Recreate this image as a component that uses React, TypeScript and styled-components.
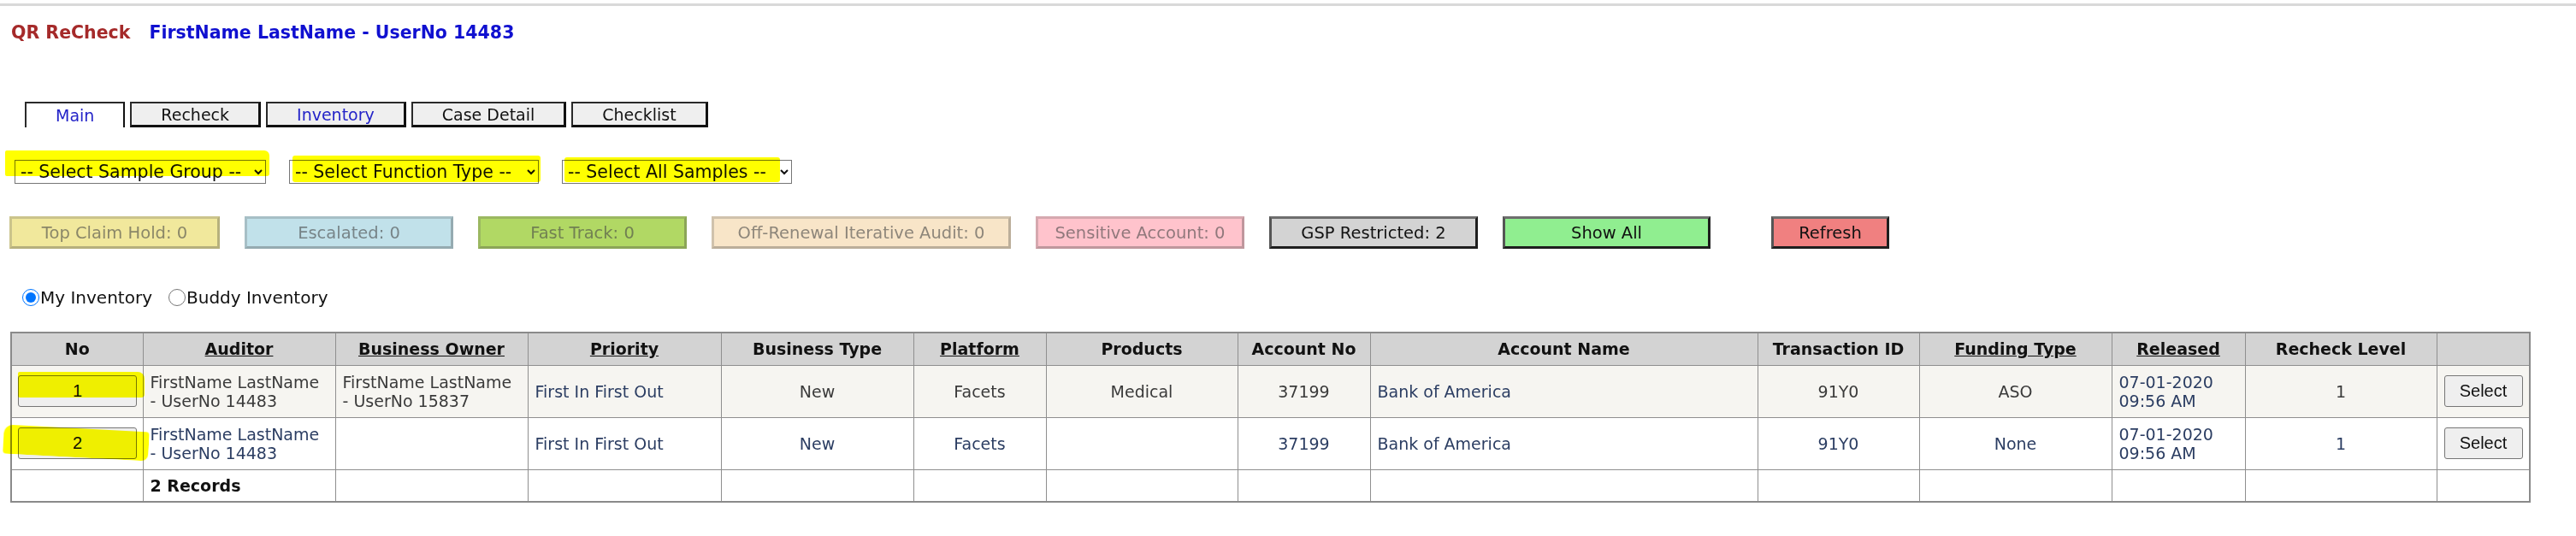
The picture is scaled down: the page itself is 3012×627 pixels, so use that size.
import React from "react";
import styled, { createGlobalStyle } from "styled-components";

const GlobalStyle = createGlobalStyle`
  html, body { margin: 0; padding: 0; background: #ffffff; }
  body { font-family: "DejaVu Sans", Verdana, sans-serif; color: #111; }
`;

const Page = styled.div`
  width: 3012px;
  padding-top: 4px;
`;

const TopRule = styled.div`
  height: 3px;
  background: #d9d9d9;
`;

const TitleBar = styled.h1`
  margin: 19px 0 0;
  padding-left: 13px;
  display: flex;
  gap: 22px;
  align-items: baseline;
  font-size: 20.5px;
  line-height: 24px;
  font-weight: bold;
`;

const AppName = styled.span`
  color: #a52a2a;
`;

const UserName = styled.span`
  color: #1010d0;
`;

const TabBar = styled.nav`
  display: flex;
  gap: 6px;
  margin: 69px 0 0 29px;
`;

const Tab = styled.div<{ $active?: boolean; $link?: boolean }>`
  box-sizing: border-box;
  height: 30px;
  padding: 0 34px;
  display: flex;
  align-items: center;
  font-size: 19px;
  color: ${(p) => (p.$link ? "#2323c8" : "#111")};
  background: ${(p) => (p.$active ? "#ffffff" : "#efefef")};
  border-style: solid;
  border-width: ${(p) => (p.$active ? "2px 2px 0 2px" : "2px 3px 3px 2px")};
  border-color: #2a2a2a #111 #111 #2a2a2a;
`;

const FilterRow = styled.div`
  display: flex;
  gap: 27px;
  margin: 38px 0 0 17px;
`;

const Mark = styled.span<{ $rot?: number; $r?: string }>`
  position: absolute;
  background: #ffff00;
  mix-blend-mode: multiply;
  pointer-events: none;
  border-radius: ${(p) => p.$r ?? "3px"};
  transform: rotate(${(p) => p.$rot ?? 0}deg);
`;

const SelectWrap = styled.div`
  position: relative;
  display: flex;
`;

const Select = styled.select<{ $w: number }>`
  width: ${(p) => p.$w}px;
  height: 28px;
  box-sizing: border-box;
  font-family: "DejaVu Sans", Verdana, sans-serif;
  font-size: 20.5px;
  color: #111;
  background: #ffffff;
  border: 1px solid #767676;
  border-radius: 0;
  padding: 0 2px;
`;

const StatusRow = styled.div`
  display: flex;
  gap: 29px;
  margin: 38px 0 0 11px;
`;

const StatusButton = styled.button<{
  $w: number;
  $bg: string;
  $off?: boolean;
  $push?: number;
}>`
  box-sizing: border-box;
  width: ${(p) => p.$w}px;
  height: 38px;
  margin-left: ${(p) => p.$push ?? 0}px;
  font-family: "DejaVu Sans", Verdana, sans-serif;
  font-size: 19.5px;
  background: ${(p) => p.$bg};
  color: ${(p) => (p.$off ? "rgba(70,70,70,0.6)" : "#111")};
  border-style: solid;
  border-width: 3px;
  border-color: ${(p) =>
    p.$off
      ? "rgba(90,90,90,0.25) rgba(60,60,60,0.32) rgba(60,60,60,0.32) rgba(90,90,90,0.25)"
      : "#6e6e6e #1e1e1e #1e1e1e #555555"};
  padding: 0;
  white-space: nowrap;
`;

const RadioRow = styled.div`
  display: flex;
  align-items: center;
  margin: 45px 0 0 26px;
  gap: 19px;
  font-size: 20px;
`;

const RadioLabel = styled.label`
  display: flex;
  align-items: center;
  gap: 1px;
`;

const Radio = styled.input`
  width: 20px;
  height: 20px;
  margin: 0;
  accent-color: #0075ff;
`;

const Table = styled.table`
  margin: 28px 0 0 12px;
  border-collapse: collapse;
  table-layout: fixed;
  width: 2946px;
  border: 2px solid #8a8a8a;
  font-size: 19px;
  line-height: 22px;
`;

const HeadRow = styled.tr`
  height: 38px;
  background: #d3d3d3;
`;

const BodyRow = styled.tr<{ $shade?: boolean; $h: number }>`
  height: ${(p) => p.$h}px;
  background: ${(p) => (p.$shade ? "#f6f5f1" : "#ffffff")};
`;

const Th = styled.th<{ $u?: boolean }>`
  border: 1px solid #8f8f8f;
  font-weight: bold;
  text-align: center;
  padding: 0 6px;
  color: #111;
  text-decoration: ${(p) => (p.$u ? "underline" : "none")};
`;

const Td = styled.td<{ $align?: string; $tone?: "navy" | "dark" }>`
  position: relative;
  border: 1px solid #8f8f8f;
  padding: 0 8px;
  vertical-align: middle;
  text-align: ${(p) => p.$align ?? "left"};
  color: ${(p) => (p.$tone === "navy" ? "#2b3d62" : "#3a3a3a")};
`;

const Strong = styled.span`
  font-weight: bold;
  color: #111;
`;

const RowButton = styled.button<{ $w: number }>`
  position: relative;
  width: ${(p) => p.$w}px;
  height: 37px;
  box-sizing: border-box;
  font-family: "Liberation Sans", Arial, sans-serif;
  font-size: 20px;
  color: #111;
  background: #efefef;
  border: 1px solid #767676;
  border-radius: 3px;
  padding: 0;
`;

const NoCell = styled(Td)`
  text-align: left;
  padding: 0 0 0 7px;
`;

type Row = {
  no: string;
  auditor: string[];
  owner: string[];
  priority: string;
  btype: string;
  platform: string;
  products: string;
  accNo: string;
  accName: string;
  txn: string;
  funding: string;
  released: string[];
  level: string;
};

const rows: Row[] = [
  {
    no: "1",
    auditor: ["FirstName LastName", "- UserNo 14483"],
    owner: ["FirstName LastName", "- UserNo 15837"],
    priority: "First In First Out",
    btype: "New",
    platform: "Facets",
    products: "Medical",
    accNo: "37199",
    accName: "Bank of America",
    txn: "91Y0",
    funding: "ASO",
    released: ["07-01-2020", "09:56 AM"],
    level: "1",
  },
  {
    no: "2",
    auditor: ["FirstName LastName", "- UserNo 14483"],
    owner: [],
    priority: "First In First Out",
    btype: "New",
    platform: "Facets",
    products: "",
    accNo: "37199",
    accName: "Bank of America",
    txn: "91Y0",
    funding: "None",
    released: ["07-01-2020", "09:56 AM"],
    level: "1",
  },
];

const columns: { label: string; w: number; u?: boolean }[] = [
  { label: "No", w: 154 },
  { label: "Auditor", w: 225, u: true },
  { label: "Business Owner", w: 225, u: true },
  { label: "Priority", w: 226, u: true },
  { label: "Business Type", w: 225 },
  { label: "Platform", w: 155, u: true },
  { label: "Products", w: 224 },
  { label: "Account No", w: 155 },
  { label: "Account Name", w: 453 },
  { label: "Transaction ID", w: 189 },
  { label: "Funding Type", w: 225, u: true },
  { label: "Released", w: 156, u: true },
  { label: "Recheck Level", w: 224 },
  { label: "", w: 109 },
];

const Lines = ({ lines }: { lines: string[] }) => (
  <>
    {lines.map((l, i) => (
      <React.Fragment key={i}>
        {i > 0 && <br />}
        {l}
      </React.Fragment>
    ))}
  </>
);

export default function App() {
  return (
    <Page>
      <GlobalStyle />
      <TopRule />
      <TitleBar>
        <AppName>QR ReCheck</AppName>
        <UserName>FirstName LastName - UserNo 14483</UserName>
      </TitleBar>

      <TabBar>
        <Tab $active $link>Main</Tab>
        <Tab>Recheck</Tab>
        <Tab $link>Inventory</Tab>
        <Tab>Case Detail</Tab>
        <Tab>Checklist</Tab>
      </TabBar>

      <FilterRow>
        <SelectWrap>
          <Select $w={294}>
            <option>-- Select Sample Group --</option>
          </Select>
          <Mark style={{ left: -11, top: -11, width: 309, height: 30 }} $r="2px 6px 3px 2px" />
        </SelectWrap>
        <SelectWrap>
          <Select $w={292}>
            <option>-- Select Function Type --</option>
          </Select>
          <Mark style={{ left: 4, top: -5, width: 290, height: 31 }} />
        </SelectWrap>
        <SelectWrap>
          <Select $w={269}>
            <option>-- Select All Samples --</option>
          </Select>
          <Mark style={{ left: 3, top: -3, width: 252, height: 29 }} />
        </SelectWrap>
      </FilterRow>

      <StatusRow>
        <StatusButton $w={246} $bg="#f1e89c" $off>Top Claim Hold: 0</StatusButton>
        <StatusButton $w={244} $bg="#c1e1ea" $off>Escalated: 0</StatusButton>
        <StatusButton $w={244} $bg="#b1d864" $off>Fast Track: 0</StatusButton>
        <StatusButton $w={350} $bg="#f8e5c8" $off>Off-Renewal Iterative Audit: 0</StatusButton>
        <StatusButton $w={244} $bg="#ffc3cc" $off>Sensitive Account: 0</StatusButton>
        <StatusButton $w={244} $bg="#d3d3d3">GSP Restricted: 2</StatusButton>
        <StatusButton $w={243} $bg="#90ee90">Show All</StatusButton>
        <StatusButton $w={138} $bg="#f08080" $push={42}>Refresh</StatusButton>
      </StatusRow>

      <RadioRow>
        <RadioLabel>
          <Radio type="radio" name="inv" defaultChecked />
          My Inventory
        </RadioLabel>
        <RadioLabel>
          <Radio type="radio" name="inv" />
          Buddy Inventory
        </RadioLabel>
      </RadioRow>

      <Table>
        <colgroup>
          {columns.map((c, i) => (
            <col key={i} style={{ width: c.w }} />
          ))}
        </colgroup>
        <thead>
          <HeadRow>
            {columns.map((c, i) => (
              <Th key={i} $u={c.u}>
                {c.label}
              </Th>
            ))}
          </HeadRow>
        </thead>
        <tbody>
          {rows.map((r, i) => {
            const first = i === 0;
            const tone = first ? "dark" : "navy";
            return (
              <BodyRow key={r.no} $shade={first} $h={61}>
                <NoCell>
                  <RowButton $w={139}>{r.no}</RowButton>
                  {first ? (
                    <Mark style={{ left: 7, top: 7, width: 148, height: 30 }} $r="2px 8px 4px 2px" />
                  ) : (
                    <Mark style={{ left: -10, top: 12, width: 170, height: 34 }} $rot={3} $r="10px 4px 8px 4px" />
                  )}
                </NoCell>
                <Td $tone={tone}>
                  <Lines lines={r.auditor} />
                </Td>
                <Td $tone={tone}>
                  <Lines lines={r.owner} />
                </Td>
                <Td $tone="navy">{r.priority}</Td>
                <Td $tone={tone} $align="center">{r.btype}</Td>
                <Td $tone={tone} $align="center">{r.platform}</Td>
                <Td $tone={tone} $align="center">{r.products}</Td>
                <Td $tone={tone} $align="center">{r.accNo}</Td>
                <Td $tone="navy">{r.accName}</Td>
                <Td $tone={tone} $align="center">{r.txn}</Td>
                <Td $tone={tone} $align="center">{r.funding}</Td>
                <Td $tone="navy">
                  <Lines lines={r.released} />
                </Td>
                <Td $tone={tone} $align="center">{r.level}</Td>
                <Td $align="center">
                  <RowButton $w={92}>Select</RowButton>
                </Td>
              </BodyRow>
            );
          })}
          <BodyRow $h={38}>
            <Td />
            <Td>
              <Strong>2 Records</Strong>
            </Td>
            {Array.from({ length: 12 }).map((_, i) => (
              <Td key={i} />
            ))}
          </BodyRow>
        </tbody>
      </Table>
    </Page>
  );
}
